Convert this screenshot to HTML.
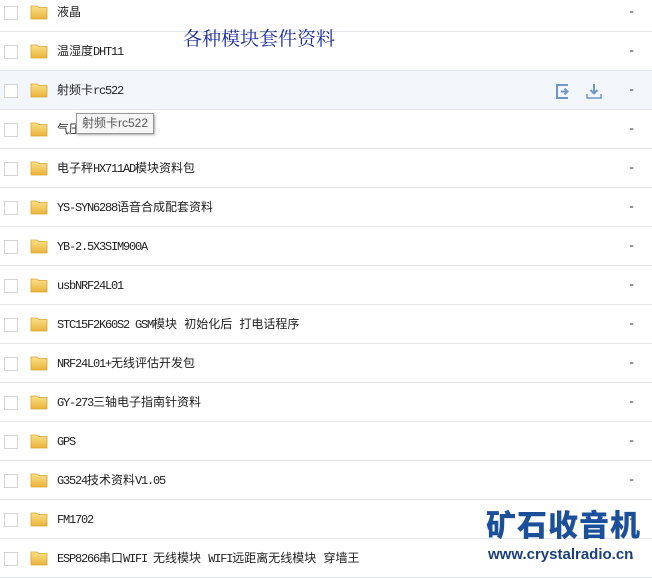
<!DOCTYPE html>
<html><head><meta charset="utf-8"><style>
body{margin:0;width:652px;height:569px;overflow:hidden;background:#fff;position:relative;font-family:"Liberation Mono","Noto Sans CJK SC",monospace;font-size:12px;color:#222}
.r{position:absolute;left:0;width:652px;height:38px;border-bottom:1px solid #e3e6ea}
.r.h{background:#f3f7fc}
.cb{position:absolute;left:4px;top:13px;width:12px;height:12px;border:1px solid #d5d5d5;background:#fff}
.f{position:absolute;left:30px;top:11px;width:18px;height:16px}
.t{position:absolute;left:57px;top:12px;white-space:nowrap;line-height:16px}
.l{letter-spacing:-1.2px}
.d{position:absolute;left:628px;top:12px}
</style></head><body>
<svg width="0" height="0" style="position:absolute"><defs><linearGradient id="g" x1="0" y1="0" x2="0" y2="1"><stop offset="0" stop-color="#fbe08a"/><stop offset="1" stop-color="#e9b43a"/></linearGradient></defs></svg>
<div id="rows"></div>
<script>
var items=["液晶","温湿度<span class=l>DHT11</span>","射频卡<span class=l>rc522</span>","气压<span class=l>BMP180</span>","电子秤<span class=l>HX711AD</span>模块资料包","<span class=l>YS-SYN6288</span>语音合成配套资料","<span class=l>YB-2.5X3SIM900A</span>","<span class=l>usbNRF24L01</span>","<span class=l>STC15F2K60S2 GSM</span>模块 初始化后 打电话程序","<span class=l>NRF24L01+</span>无线评估开发包","<span class=l>GY-273</span>三轴电子指南针资料","<span class=l>GPS</span>","<span class=l>G3524</span>技术资料<span class=l>V1.05</span>","<span class=l>FM1702</span>","<span class=l>ESP8266</span>串口<span class=l>WIFI </span>无线模块 <span class=l>WIFI</span>远距离无线模块 穿墙王"];
var h="";
items.forEach(function(s,i){
h+='<div class="r'+(i==2?' h':'')+'" style="top:'+(-7+i*39)+'px"><div class="cb"></div><svg class="f" viewBox="0 0 18 16"><path d="M1 2h6l1.5 1.5H17V15H1z" fill="url(#g)" stroke="#d9a52e" stroke-width=".8"/></svg><div class="t">'+s+'</div><div class="d">-</div></div>';
});
document.getElementById("rows").innerHTML=h;
</script>
<svg style="position:absolute;left:555px;top:82px" width="18" height="18" viewBox="0 0 18 18"><path d="M13 3H2v13h11" fill="none" stroke="#6f97c8" stroke-width="2"/><path d="M6 9.5h6M9.5 6.5l3 3-3 3" fill="none" stroke="#6f97c8" stroke-width="2"/></svg>
<svg style="position:absolute;left:585px;top:82px" width="18" height="18" viewBox="0 0 18 18"><path d="M9 2v9M5.5 8l3.5 3.5L12.5 8" fill="none" stroke="#6f97c8" stroke-width="2"/><path d="M2 12v4h14v-4" fill="none" stroke="#6f97c8" stroke-width="1.5"/></svg>
<div style="position:absolute;left:76px;top:113px;padding:1px 5px;border:1px solid #999;background:#f6f6f6;box-shadow:1px 1px 2px #aaa;font-family:'Liberation Sans','Noto Sans CJK SC',sans-serif;font-size:12px;color:#555;line-height:17px">射频卡rc522</div>
<div style="position:absolute;left:183px;top:24px;font-family:'Noto Serif CJK SC',serif;font-size:19px;color:#1a2a9c">各种模块套件资料</div>
<div style="position:absolute;left:486px;top:505px;font-family:'Noto Sans CJK SC',sans-serif;font-weight:900;font-size:30px;color:#1c4f9a;line-height:36px;letter-spacing:1px">矿石收音机</div>
<div style="position:absolute;left:488px;top:546px;font-family:'Liberation Sans',sans-serif;font-weight:bold;font-size:15px;color:#1c3f7a">www.crystalradio.cn</div>
</body></html>
